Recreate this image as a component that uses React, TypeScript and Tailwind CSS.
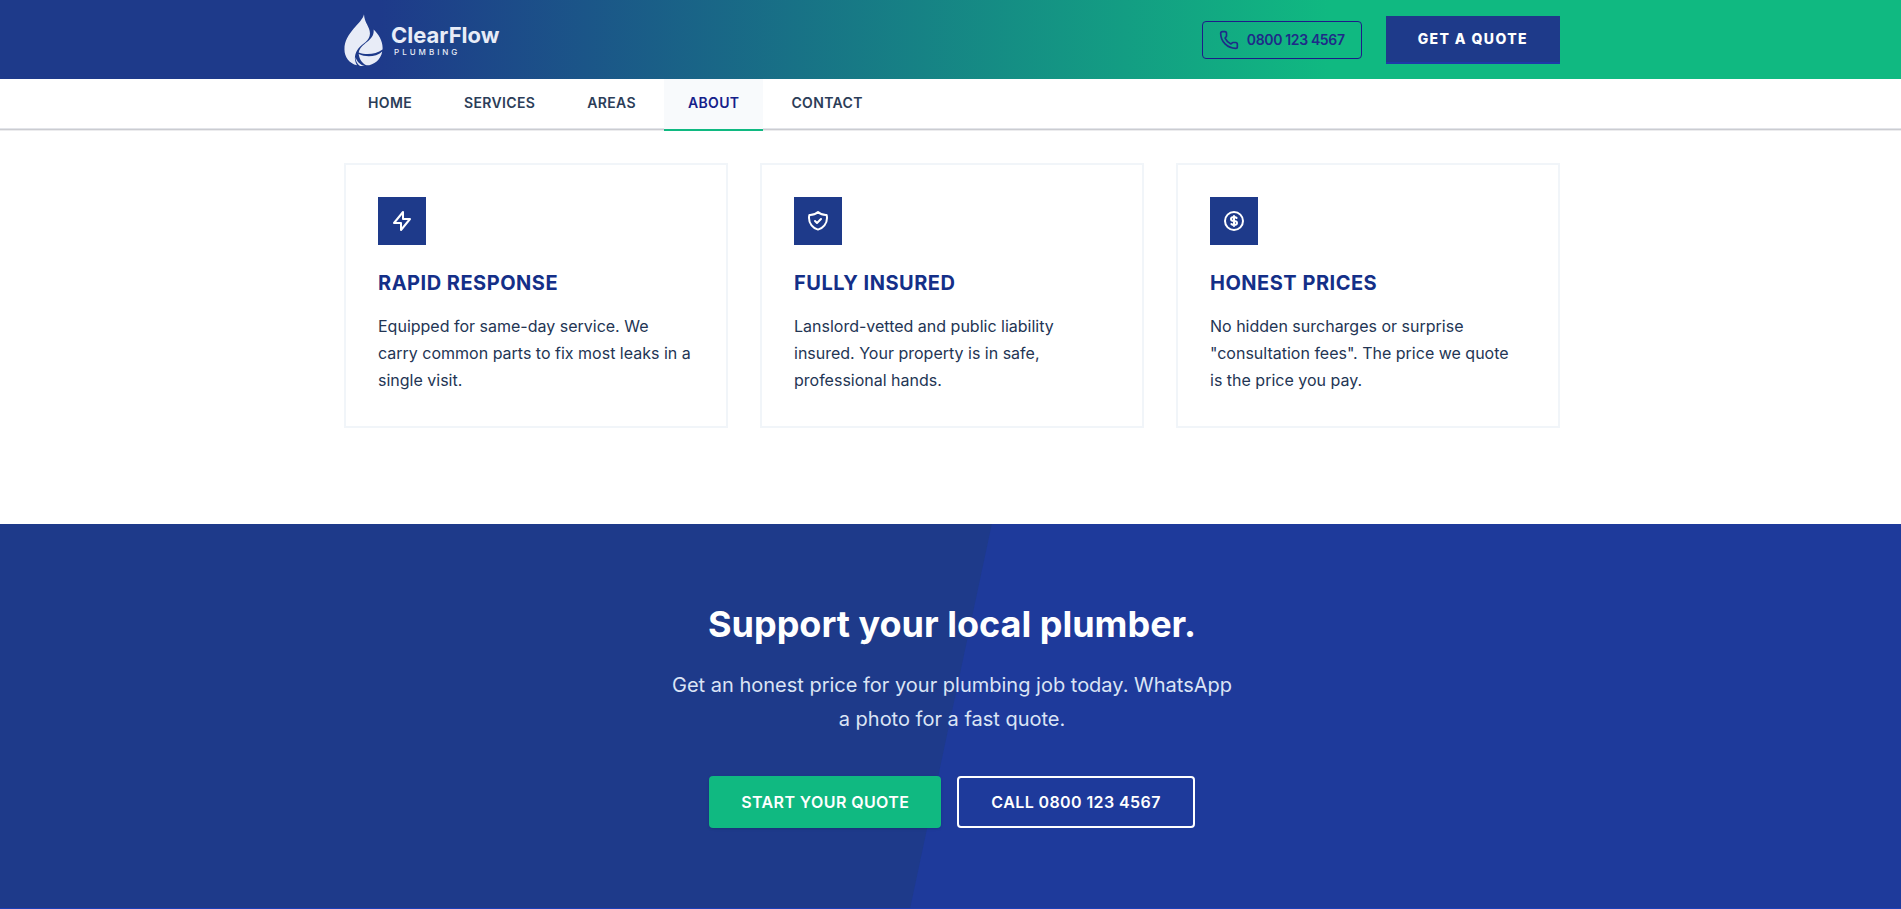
import React from "react";
import { Phone } from "lucide-react";

const navItems = ["Home", "Services", "Areas", "About", "Contact"];

const features = [
  {
    title: "Rapid Response",
    text: "Equipped for same-day service. We\ncarry common parts to fix most leaks in a single visit.",
    icon: "M13 10V3L4 14h7v7l9-11h-7z",
  },
  {
    title: "Fully Insured",
    text: "Lanslord-vetted and public liability insured. Your property is in safe, professional hands.",
    icon: "M9 12l2 2 4-4m5.618-4.016A11.955 11.955 0 0112 2.944a11.955 11.955 0 01-8.618 3.04A12.02 12.02 0 003 9c0 5.591 3.824 10.29 9 11.622 5.176-1.332 9-6.03 9-11.622 0-1.042-.133-2.052-.382-3.016z",
  },
  {
    title: "Honest Prices",
    text: 'No hidden surcharges or surprise "consultation fees". The price we quote\nis the price you pay.',
    icon: "M12 8c-1.657 0-3 .895-3 2s1.343 2 3 2 3 .895 3 2-1.343 2-3 2m0-8c1.11 0 2.08.402 2.599 1M12 8V7m0 1v8m0 0v1m0-1c-1.11 0-2.08-.402-2.599-1M21 12a9 9 0 11-18 0 9 9 0 0118 0z",
  },
];

function Logo() {
  return (
    <a href="#home" className="flex items-center gap-2 text-[#e8ecf7]" aria-label="ClearFlow Plumbing">
      <svg viewBox="13 10 117 157" className="h-[52px] w-[39px]" fill="currentColor" aria-hidden="true">
        <path d="M73 11C68 38 14 66 14 117c0 22 14 42 38 48C42 148 44 130 56 114c12-15 35-22 35-45C91 48 74 38 73 11z" />
        <path d="M102 57c4 34-38 40-45 69 22 9 52 6 72-9C131 92 117 72 102 57z" />
        <path d="M57 131c2 17 12 30 24 34 22 0 43-18 47-42-18 17-48 19-71 8z" />
        <path d="M47 140c0 11 5 21 14 27h14c-14-3-24-14-28-27z" />
      </svg>
      <span className="flex flex-col gap-px">
        <span className="text-[22px] leading-6 font-bold">ClearFlow</span>
        <span className="pl-[3px] text-[8px] leading-2 font-medium tracking-[3px]">PLUMBING</span>
      </span>
    </a>
  );
}

function Header() {
  return (
    <header className="relative z-10">
      <div className="bg-linear-to-r/srgb from-[#1e3a8a] from-20% to-[#10b981] to-70% pl-[3px]">
        <div className="mx-auto flex h-[79px] max-w-7xl items-center justify-between px-8">
          <Logo />
          <div className="flex items-center gap-6">
            <a
              href="tel:08001234567"
              className="flex h-[38px] items-center gap-2 rounded border border-[#1e1b8a] px-4 text-sm font-semibold tracking-tight text-[#1e2b88]"
            >
              <Phone size={20} aria-hidden="true" />
              0800 123 4567
            </a>
            <button
              type="button"
              className="h-12 border-b-2 border-[#1e3aa8] bg-[#1e3a8a] px-8 text-sm font-extrabold tracking-widest text-white"
            >
              GET A QUOTE
            </button>
          </div>
        </div>
      </div>
      <nav
        className="border-b border-[#e2e4e9] bg-white pl-[3px] shadow-[0_1px_0_#cbccd1,0_2px_0_#ececee]"
        aria-label="Main"
      >
        <ul className="mx-auto flex max-w-7xl gap-1 px-8">
          {navItems.map((item) => (
            <li key={item} className="-mb-[3px]">
              <a
                href={"#" + item.toLowerCase()}
                className={
                  item === "About"
                    ? "block border-b-2 border-[#10b981] bg-[#f8fafc] px-6 pt-[14px] pb-4 text-sm font-semibold tracking-wide text-[#14208a] uppercase"
                    : "block border-b-2 border-transparent px-6 pt-[14px] pb-4 text-sm font-semibold tracking-wide text-[#2b3d58] uppercase"
                }
              >
                {item}
              </a>
            </li>
          ))}
        </ul>
      </nav>
    </header>
  );
}

function Features() {
  return (
    <section className="bg-white pt-[34px] pb-24 pl-[3px]">
      <div className="mx-auto grid max-w-7xl grid-cols-3 gap-8 px-8">
        {features.map((feature) => (
          <article key={feature.title} className="border-2 border-[#f1f5f9] p-8">
            <div className="mb-6 flex size-12 items-center justify-center bg-[#1e3a8a] text-white">
              <svg
                viewBox="0 0 24 24"
                className="size-6"
                fill="none"
                stroke="currentColor"
                strokeWidth={2}
                strokeLinecap="round"
                strokeLinejoin="round"
                aria-hidden="true"
              >
                <path d={feature.icon} />
              </svg>
            </div>
            <h3 className="mb-4 text-xl font-bold tracking-wide text-[#142f88] uppercase">{feature.title}</h3>
            <p className="text-base leading-[27px] whitespace-pre-line text-[#233554]">{feature.text}</p>
          </article>
        ))}
      </div>
    </section>
  );
}

function CallToAction() {
  return (
    <section className="relative overflow-hidden bg-[#1e3a8a] py-20 pl-[3px] text-center text-white">
      <div className="absolute inset-y-0 -right-24 left-1/2 -skew-x-12 bg-[#1e3a9b]" />
      <div className="relative mx-auto max-w-4xl px-8">
        <h2 className="mb-6 text-4xl font-bold">Support your local plumber.</h2>
        <p className="mx-auto mb-10 max-w-xl text-xl leading-[34px] text-[#dbe4f5]">
          Get an honest price for your plumbing job today. WhatsApp a photo for a fast quote.
        </p>
        <div className="flex justify-center gap-4">
          <button
            type="button"
            className="h-[52px] rounded bg-[#10b981] px-8 text-base font-semibold tracking-wide text-white shadow-sm"
          >
            START YOUR QUOTE
          </button>
          <a
            href="tel:08001234567"
            className="flex h-[52px] items-center rounded border-2 border-white px-8 text-base font-semibold tracking-wide text-white"
          >
            CALL 0800 123 4567
          </a>
        </div>
      </div>
    </section>
  );
}

export default function App() {
  return (
    <div className="min-h-screen bg-white font-['Inter',sans-serif]">
      <Header />
      <main>
        <Features />
        <CallToAction />
      </main>
      <footer className="border-t border-[#1d3fb5]" />
    </div>
  );
}
